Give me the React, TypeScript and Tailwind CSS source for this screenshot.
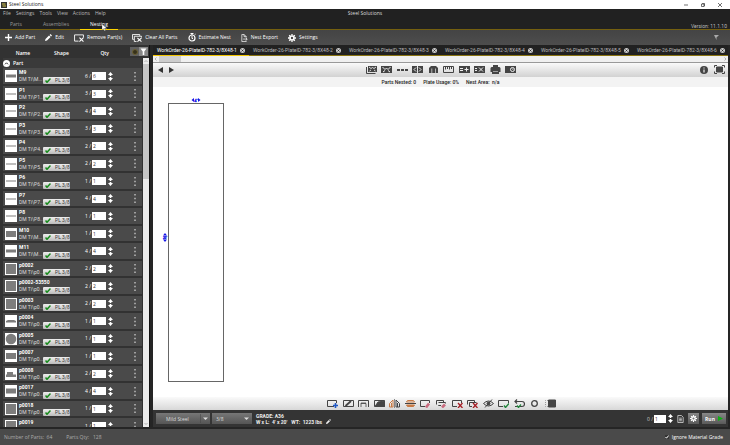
import { useState } from 'react';
import type { ReactNode } from 'react';

interface Part {
  name: string;
  path: string;
  qty: number;
  shape: string;
}

const parts: Part[] = [
  { name: 'M9', path: 'DM Ti\\M...', qty: 6, shape: 'bar' },
  { name: 'P1', path: 'DM Ti\\P1...', qty: 3, shape: 'line' },
  { name: 'P2', path: 'DM Ti\\P2...', qty: 4, shape: 'line' },
  { name: 'P3', path: 'DM Ti\\P3...', qty: 3, shape: 'line' },
  { name: 'P4', path: 'DM Ti\\P4...', qty: 2, shape: 'line' },
  { name: 'P5', path: 'DM Ti\\P5...', qty: 2, shape: 'line' },
  { name: 'P6', path: 'DM Ti\\P6...', qty: 1, shape: 'line' },
  { name: 'P7', path: 'DM Ti\\P7...', qty: 4, shape: 'line' },
  { name: 'P8', path: 'DM Ti\\P8...', qty: 1, shape: 'line' },
  { name: 'M10', path: 'DM Ti\\M...', qty: 1, shape: 'plate' },
  { name: 'M11', path: 'DM Ti\\M...', qty: 4, shape: 'bar' },
  { name: 'p0002', path: 'DM Ti\\p0...', qty: 2, shape: 'square' },
  { name: 'p0002-53550', path: 'DM Ti\\p0...', qty: 2, shape: 'square' },
  { name: 'p0003', path: 'DM Ti\\p0...', qty: 2, shape: 'square' },
  { name: 'p0004', path: 'DM Ti\\p0...', qty: 1, shape: 'cap' },
  { name: 'p0005', path: 'DM Ti\\p0...', qty: 1, shape: 'circle' },
  { name: 'p0007', path: 'DM Ti\\p0...', qty: 1, shape: 'plate' },
  { name: 'p0008', path: 'DM Ti\\p0...', qty: 2, shape: 'step' },
  { name: 'p0017', path: 'DM Ti\\p0...', qty: 4, shape: 'wide' },
  { name: 'p0018', path: 'DM Ti\\p0...', qty: 1, shape: 'square' },
  { name: 'p0019', path: 'DM Ti\\p0...', qty: 1, shape: 'square' },
];

const shapePaths: Record<string, string> = {
  bar: 'M1 4.5h10v3H1z',
  line: 'M1 5.5h10v1H1z',
  plate: 'M1 3h10v6H1z',
  square: 'M1 1h10v10H1z',
  cap: 'M1 7.5V6l2-1h6l2 1v1.5z',
  circle: 'M6 .7a5.3 5.3 0 1 0 0 10.6A5.3 5.3 0 1 0 6 .7z',
  step: 'M1 9V6.5h1V4h6v2.5h3V9z',
  wide: 'M1 3.5h10v5H1z',
};

const workOrders = [1, 2, 3, 4, 5, 6];

function Icon({ children, className = 'h-[9px] w-[11px]', box = '0 0 11 9' }: { children: ReactNode; className?: string; box?: string }) {
  return (
    <svg viewBox={box} className={`shrink-0 ${className}`} fill="none" stroke="currentColor" strokeWidth="1">
      {children}
    </svg>
  );
}

function Gear({ className }: { className: string }) {
  return (
    <Icon box="0 0 10 10" className={className}>
      <circle cx="5" cy="5" r="2.5" strokeWidth="2" />
      <path d="M5 0v2M5 8v2M0 5h2M8 5h2M1.5 1.5l1.3 1.3M7.2 7.2l1.3 1.3M8.5 1.5L7.2 2.8M2.8 7.2L1.5 8.5" strokeWidth="1.6" />
    </Icon>
  );
}

function Pencil({ className }: { className: string }) {
  return (
    <Icon box="0 0 7 7" className={className}>
      <path d="M0 7l.5-2L4 1.4 5.6 3 2 6.5zM4.6.9L5.5 0 7 1.5l-.9.9z" fill="currentColor" stroke="none" />
    </Icon>
  );
}

function Spinner({ label }: { label: string }) {
  return (
    <span className="flex flex-col gap-px">
      <button aria-label={`Increase ${label}`} className="block">
        <Icon box="0 0 5 4" className="block h-1 w-[5px]"><path d="M2.500 0L5 3H3.300v1H1.700V3H0z" fill="currentColor" stroke="none" /></Icon>
      </button>
      <button aria-label={`Decrease ${label}`} className="block">
        <Icon box="0 0 5 4" className="block h-1 w-[5px]"><path d="M2.500 4L5 1H3.300V0H1.700v1H0z" fill="currentColor" stroke="none" /></Icon>
      </button>
    </span>
  );
}

const frame = 'M.5 1.5h10v6H.5z';

const viewTools = [
  { label: 'Nest all', icon: <><path d="M2 1h9v6H2z" fill="currentColor" stroke="none" /><path d="M.5 2v6.500H9.500" /><path d="M3 2l2 1.500L6.500 2.500 8 3.500 10 2M3.500 6l1.500-1M9.500 6L8 5" stroke="#eee" strokeWidth=".9" /></> },
  { label: 'Nest image', icon: <><path d="M0 1h11v7H0z" fill="currentColor" stroke="none" /><path d="M1.500 2l2.500 2.500L5.500 3 7 4.500 9.500 2M2 7l2-1.500M9 7L7 5.500" stroke="#eee" /></> },
  { label: 'Line style', icon: <path d="M0 5h3M4 5h3M8 5h3" strokeWidth="2" /> },
  { label: 'Split', icon: <><path d="M0 1h5v7H0zM6 1h5v7H6z" fill="currentColor" stroke="none" /><path d="M4 2.500L2 4.500l2 2M7 2.500l2 2-2 2" stroke="#eee" /></> },
  { label: 'Stack', icon: <path d="M1 3l2-2h5l2 2v5H8V3.500h-.7V8H4.200V3.500h-.7V8H1z" fill="currentColor" stroke="none" /> },
  { label: 'Measure', icon: <><path d={frame} /><path d="M2.500 2v2.500M4.500 2v2M6.500 2v2.500M8.500 2v2" /></> },
  { label: 'Add sheet', icon: <><path d="M0 1h11v7H0z" fill="currentColor" stroke="none" /><path d="M1 3.500h3M1 5.500h3M7.500 2.500v4M5.500 4.500h4" stroke="#eee" /></> },
  { label: 'Remove sheet', icon: <><path d="M0 1h11v7H0z" fill="currentColor" stroke="none" /><path d="M1 3.500h2M1 5.500h2M5 2.500l4 4M9 2.500l-4 4" stroke="#eee" /></> },
  { label: 'Print', icon: <><path d="M3 0h5v2h1.500l1 1v4H9v2H2V7H.5V3l1-1H3z" fill="currentColor" stroke="none" /><path d="M3 6.500h5" stroke="#ddd" strokeWidth=".6" /></> },
  { label: 'Snapshot', icon: <><path d="M0 1h11v7H0z" fill="currentColor" stroke="none" /><circle cx="7.500" cy="4.500" r="2" stroke="#eee" /><path d="M7.500 3.500v1h1" stroke="#eee" strokeWidth=".6" /></> },
];

const editTools = [
  { label: 'Add plate', icon: <><path d="M7 7.500H.5v-6h9V4" /><path d="M8.500 4v5M6 6.500h5" stroke="#1f57c4" strokeWidth="1.600" /></> },
  { label: 'Edit plate', icon: <><path d={frame} /><path d="M2.500 7L8 2" strokeWidth="1.800" /></> },
  { label: 'Open corner', icon: <><path d="M.5 8V1.500h10V8" /><path d="M3 8V4h5M3 4.500h5V8" strokeWidth=".8" /></> },
  { label: 'Fill corner', icon: <><path d={frame} /><path d="M1 7.500l3-4.500 6.500-1v5.500z" fill="currentColor" /></> },
  { label: 'Mirror', icon: <><path d="M4 1v7H.5V4.500zM2.500 4v4" stroke="#c87a45" /><path d="M5.500 0v9" strokeWidth=".6" /><path d="M7 1v7h3.500V4.500zM8.500 4v4" /></> },
  { label: 'Flip', icon: <><path d="M1.500 3l1-1.500h6l1 1.500z" stroke="#c87a45" /><path d="M0 4.500h11" /><path d="M1.500 6h8l-1 1.500h-6z" fill="#c87a45" stroke="#c87a45" /></> },
  { label: 'Erase', icon: <><path d="M5 7.500H.5v-6h9V4" /><path d="M6 8.500l3-4" stroke="#c96b7e" strokeWidth="2.600" /></> },
  { label: 'Erase all', icon: <><path d="M5 6.500H2.500V7M.5 5.500v-4h7v2M2.500 3.500h7v1" /><path d="M6 8.500l3-3" stroke="#c96b7e" strokeWidth="2.600" /></> },
  { label: 'Delete plate', icon: <><path d="M5 7.500H.5v-6h9V4" /><path d="M6 4l4.500 5M10.500 4L6 9" stroke="#a51f26" strokeWidth="1.300" /></> },
  { label: 'Delete plates', icon: <><path d="M5 7.500H2.500v-4h7M.5 5.500v-4h7v2" /><path d="M6 4l4.500 5M10.500 4L6 9" stroke="#a51f26" strokeWidth="1.300" /></> },
  { label: 'Hide', icon: <><path d="M.5 4.500q5-5 10 0-5 5-10 0z" /><circle cx="5.500" cy="4.500" r="1.500" fill="currentColor" /><path d="M2 8.500L9 .5" /></> },
  { label: 'Accept', icon: <><path d="M5 7.500H.5v-6h10V4" /><path d="M6 6.500l1.500 2L11 4.500" stroke="#21843b" strokeWidth="1.400" /></> },
  { label: 'Undo', icon: <><path d="M3 .5l-2 2 2 2M1 2.500h7q2.500 0 2.500 2.500T8 7.500H1" strokeWidth="1.200" /><path d="M3 6.500l1.500 2L7 5.500" stroke="#21843b" strokeWidth="1.300" /></> },
  { label: 'Circle', icon: <circle cx="5.500" cy="4.500" r="2.800" strokeWidth="1.300" /> },
  { label: 'Contrast', icon: <><path d="M3.500 1h7v7h-7z" fill="currentColor" /><path d="M3 1.500H.5v6H3" stroke="#999" strokeDasharray="1 1" /></> },
];

const actions = [
  { label: 'Add Part', icon: <Icon box="0 0 7 7" className="size-[7px]"><path d="M3.500 0v7M0 3.500h7" strokeWidth="1.400" /></Icon> },
  { label: 'Edit', icon: <Pencil className="size-[7px]" /> },
  { label: 'Remove Part(s)', icon: <Icon className="h-2 w-[10px]"><path d="M5 8H.5V1h10v3" /><path d="M6 4l4.500 4.500M10.500 4L6 8.500" strokeWidth="1.200" /></Icon> },
  { label: 'Clear All Parts', icon: <Icon className="h-2 w-[10px]"><path d="M2 6H.5V.5h8V2M5 8.500H2.500v-6h8V4" /><path d="M6 4.500l4.500 4M10.500 4.500L6 8.500" strokeWidth="1.200" /></Icon> },
  { label: 'Estimate Nest', icon: <Icon box="0 0 8 9" className="h-[9px] w-2"><circle cx="4" cy="5" r="3" strokeWidth="1.200" /><path d="M2.500.5h3M4 1v1M4 3v2.500h1M6.500 2l1-.8" /></Icon> },
  { label: 'Nest Export', icon: <Icon box="0 0 7 9" className="h-2 w-[7px]"><path d="M5.500 4V3L3 .5H.5v8h5V7.500M3 .5V3h2.500M2 5.700h4.500M5 4.300l1.500 1.400L5 7.200" strokeWidth=".8" /></Icon> },
  { label: 'Settings', icon: <Gear className="size-2" /> },
];

function PartRow({ part }: { part: Part }) {
  return (
    <tr className="odd:h-[18px] even:h-[17px]">
      <td className="border-b-2 border-[#323232] bg-[#4a4a4a] p-0 pl-0.5">
        <div className="flex h-[14px] items-center gap-0.5">
          <svg viewBox="0 0 12 12" className="size-3 shrink-0 bg-white">
            <path d={shapePaths[part.shape]} fill="#7d7d7d" />
          </svg>
          <div className="w-6 font-[Roboto,sans-serif] text-[5px] leading-[7px] whitespace-nowrap">
            <div className="font-bold text-white">{part.name}</div>
            <div className="text-[#ddd]">{part.path}</div>
          </div>
        </div>
      </td>
      <td className="border-b-2 border-[#323232] bg-[#4a4a4a] p-0 align-bottom">
        <button className="flex h-[7px] w-[27px] items-center gap-1 rounded-[1px] bg-linear-to-b from-[#eee] to-[#bbb] pl-0.5 font-[Roboto,sans-serif] text-[5px] leading-[7px] text-[#333]">
          <Icon box="0 0 6 5" className="h-[5px] w-1.5 text-[#178a1c]"><path d="M.5 2.500L2 4.300 5.500.5" strokeWidth="1.500" /></Icon>
          PL 3/8
        </button>
      </td>
      <td className="border-b-2 border-[#323232] bg-[#4a4a4a] p-0">
        <div className="flex items-center justify-end gap-0.5 text-[5px] leading-[7px]">
          <label className="flex items-center gap-px">
            {part.qty} /
            <input aria-label={`${part.name} quantity`} defaultValue={part.qty} className="h-2 w-[14px] bg-white pl-px text-[#333] outline-none" />
          </label>
          <Spinner label={part.name} />
        </div>
      </td>
      <td className="border-b-2 border-[#323232] bg-[#4a4a4a] p-0 pr-1.5">
        <button aria-label={`${part.name} menu`} className="ml-auto block">
          <Icon box="0 0 2 9" className="block h-[9px] w-0.5 text-[#ccc]"><path d="M1 0v1.500M1 3.700v1.500M1 7.500V9" strokeWidth="1.300" /></Icon>
        </button>
      </td>
    </tr>
  );
}

function PartsPanel() {
  return (
    <aside className="relative flex w-[150px] shrink-0 overflow-hidden border-r border-[#111] bg-[#323232] pl-[3px]">
      <div className="min-w-0 flex-1">
        <table className="w-full table-fixed border-separate border-spacing-0">
          <colgroup>
            <col className="w-10" />
            <col className="w-[37px]" />
            <col className="w-[33px]" />
            <col />
          </colgroup>
          <thead>
            <tr className="h-[13px] text-[5px] leading-[7px]">
              <th className="p-0 pt-[3px] font-semibold">Name</th>
              <th className="p-0 pt-[3px] font-semibold">Shape</th>
              <th className="p-0 pt-[3px] pr-1 text-right font-semibold">Qty</th>
              <th className="p-0" aria-label="Menu" />
            </tr>
            <tr className="h-[10px]">
              <th colSpan={4} className="bg-[#3a3a3a] p-0 text-left text-[5px] leading-[7px] font-semibold">
                <button className="flex items-center gap-[3px]">
                  <Icon box="0 0 7 7" className="size-[7px]"><circle cx="3.500" cy="3.500" r="3.500" fill="white" stroke="none" /><path d="M2 4.300l1.500-1.500L5 4.300" stroke="#333" /></Icon>
                  Part
                </button>
              </th>
            </tr>
          </thead>
          <tbody>
            {parts.map((part) => (
              <PartRow key={part.name} part={part} />
            ))}
          </tbody>
        </table>
      </div>
      <div className="mt-[13px] ml-px flex w-1.5 flex-col bg-[#ececec] text-[#999]">
        <Icon box="0 0 6 6" className="size-1.5"><path d="M1.500 4L3 2.500 4.500 4" strokeWidth=".7" /></Icon>
        <div className="h-[115px] bg-[#c6c6c6]" />
        <Icon box="0 0 6 6" className="mt-auto size-1.5"><path d="M1.500 2L3 3.500 4.500 2" strokeWidth=".7" /></Icon>
      </div>
      <div className="absolute top-0.5 right-px flex h-[9px] w-[18px] bg-[#888]">
        <button aria-label="Group" className="flex flex-1 items-center justify-center bg-[#606060]">
          <span className="size-1.5 rounded-full border border-[#6b6030] bg-[#36311b]" />
        </button>
        <button aria-label="Filter" className="flex flex-1 items-center justify-center">
          <Icon box="0 0 7 7" className="size-[7px]"><path d="M.5.500h6L4.300 3.500V7H2.700V3.500z" fill="white" stroke="none" /></Icon>
        </button>
      </div>
    </aside>
  );
}

function Workspace() {
  return (
    <main className="flex min-w-0 flex-1 flex-col border-x-[3px] border-r-2 border-[#252525] bg-white">
      <div className="flex h-[11px] shrink-0 overflow-hidden bg-[#212121]">
        {workOrders.map((n) => (
          <div
            key={n}
            className={`flex w-24 shrink-0 items-center justify-between border-b pt-px pr-1 pl-1 font-[Roboto,sans-serif] text-[5px] leading-[7px] whitespace-nowrap ${n === 1 ? 'border-[#f2c500] text-white' : 'border-[#8a7410] text-[#bbb]'}`}
          >
            <button>WorkOrder-26-PlateID-782-3/8X48-{n}</button>
            <button aria-label={`Close work order ${n}`}>
              <Icon box="0 0 5 5" className="size-[5px]"><circle cx="2.500" cy="2.500" r="2.500" fill="#ccc" stroke="none" /><path d="M1.500 1.500l2 2M3.500 1.500l-2 2" stroke="#222" strokeWidth=".8" /></Icon>
            </button>
          </div>
        ))}
      </div>
      <div className="flex h-[7px] shrink-0 items-center border-b border-[#999] bg-[#f0f0f0] text-[#888]">
        <Icon box="0 0 6 6" className="size-1.5"><path d="M3.500 1.500L2 3l1.500 1.500" strokeWidth=".6" /></Icon>
        <div className="h-full w-[22px] bg-[#cdcdcd]" />
        <Icon box="0 0 6 6" className="ml-auto size-1.5"><path d="M2.500 1.500L4 3 2.500 4.500" strokeWidth=".6" /></Icon>
      </div>
      <div className="grid h-[14px] shrink-0 grid-cols-[1fr_151px_1fr] items-center bg-linear-to-b from-[#fafafa] to-[#d2d2d2] pb-px pl-px text-[#444]">
        <div className="flex gap-1.5 pl-1">
          <button aria-label="Previous"><Icon box="0 0 5 6" className="block h-1.5 w-[5px] text-[#333]"><path d="M5 0v6L0 3z" fill="currentColor" stroke="none" /></Icon></button>
          <button aria-label="Next"><Icon box="0 0 5 6" className="block h-1.5 w-[5px] text-[#333]"><path d="M0 0v6l5-3z" fill="currentColor" stroke="none" /></Icon></button>
        </div>
        <div className="flex justify-between">
          {viewTools.map((tool) => (
            <button key={tool.label} aria-label={tool.label}><Icon className="block h-[9px] w-[11px]">{tool.icon}</Icon></button>
          ))}
        </div>
        <div className="flex items-center justify-end gap-1.5 pr-[3px]">
          <button aria-label="Info">
            <Icon box="0 0 8 8" className="block size-2"><circle cx="4" cy="4" r="4" fill="currentColor" stroke="none" /><path d="M4 1.500v1M4 3.500v3" stroke="#eee" strokeWidth="1.200" /></Icon>
          </button>
          <button aria-label="Fit to window">
            <Icon className="block h-[9px] w-[11px]"><path d="M2.500 2h6v5h-6z" fill="currentColor" /><path d="M.5 2.500V.5H3M8 .5h2.500v2M10.500 6.500v2H8M3 8.500H.5v-2" /></Icon>
          </button>
        </div>
      </div>
      <div className="flex h-[10px] shrink-0 items-center justify-center gap-[7px] bg-[#f3f3f3] font-[Roboto,sans-serif] text-[5px] leading-[7px] font-medium text-[#222]">
        <span>Parts Nested: 0</span>
        <span>Plate Usage: 0%</span>
        <span>Nest Area:&nbsp; n/a</span>
      </div>
      <div className="min-h-0 flex-1 pt-2 pl-2">
        <svg viewBox="0 0 64 288" className="h-[288px] w-16">
          <rect x="7.500" y="8.500" width="55" height="278" fill="white" stroke="#666" />
          <g fill="#1414e6" stroke="#1414e6" fontFamily="'Open Sans', sans-serif" fontSize="4" fontWeight="700">
            <path d="M30.500 5l2.500-2v4zM39.500 5L37 3v4z" stroke="none" />
            <text x="35" y="6.500" textAnchor="middle" strokeWidth=".3">4&apos;</text>
            <path d="M4 138l-2 2.500h4zM4 147l-2-2.500h4z" stroke="none" />
            <text x="4" y="144" textAnchor="middle" fontSize="3" strokeWidth=".3">20&apos;</text>
          </g>
        </svg>
      </div>
      <div className="flex h-[13px] shrink-0 items-center justify-center bg-linear-to-b from-[#fafafa] to-[#d8d8d8] pl-0.5 text-[#444]">
        <div className="flex w-[229px] justify-between">
          {editTools.map((tool) => (
            <button key={tool.label} aria-label={tool.label}><Icon className="block h-[9px] w-[11px]">{tool.icon}</Icon></button>
          ))}
        </div>
      </div>
      <MaterialBar />
    </main>
  );
}

function MaterialBar() {
  return (
    <div className="flex h-[17px] shrink-0 items-center bg-[#343434] pr-0.5 pl-[3px] text-[5px] leading-[6px]">
      <div className="relative mr-0.5 w-[54px]">
        <select aria-label="Material" className="block h-[11px] w-full appearance-none bg-linear-to-b from-[#777] to-[#555] pl-[10px] text-[#ddd]">
          <option>Mild Steel</option>
        </select>
        <svg viewBox="0 0 10 11" className="pointer-events-none absolute top-0 right-0 h-[11px] w-[10px]"><path d="M0 1v9" stroke="#444" /><path d="M3 4.500h5L5.500 7z" fill="#ddd" /></svg>
      </div>
      <div className="relative mr-1 w-10">
        <select aria-label="Thickness" className="block h-[11px] w-full appearance-none bg-linear-to-b from-[#777] to-[#555] pl-1 text-[#ddd]">
          <option>3/8</option>
        </select>
        <svg viewBox="0 0 10 11" className="pointer-events-none absolute top-0 right-0 h-[11px] w-[10px]"><path d="M2 4.500h5L4.500 7z" fill="#ddd" /></svg>
      </div>
      <div className="font-[Roboto,sans-serif] font-bold whitespace-nowrap text-[#eee]">
        <div>GRADE: A36</div>
        <div className="flex items-center gap-1">
          <span>W x L:&nbsp; 4&apos; x 20&apos;</span>
          <span>WT:&nbsp; 1223 lbs</span>
          <button aria-label="Edit plate size"><Pencil className="block size-[5px]" /></button>
        </div>
      </div>
      <div className="ml-auto flex items-center gap-0.5">
        <label className="flex items-center gap-px text-[#ccc]">
          0 /
          <input aria-label="Plate quantity" defaultValue="1" className="h-2 w-3 bg-white pl-px text-[#333] outline-none" />
        </label>
        <Spinner label="plate quantity" />
        <button aria-label="Report" className="mx-0.5">
          <Icon box="0 0 7 9" className="block h-2 w-[7px] text-[#ddd]"><path d="M.5.500h4l2 2v6h-6zM2 3.500h3M2 5h3M2 6.500h3" strokeWidth=".9" /></Icon>
        </button>
        <button aria-label="Run settings" className="mr-px flex size-[11px] items-center justify-center bg-linear-to-b from-[#888] to-[#5a5a5a]">
          <Gear className="size-[7px]" />
        </button>
        <button className="flex h-[11px] w-6 items-center justify-center gap-[3px] bg-linear-to-b from-[#888] to-[#5a5a5a] font-bold">
          Run
          <Icon box="0 0 5 5" className="size-[5px]"><path d="M0 0l5 2.500L0 5z" fill="#0fae14" stroke="none" /></Icon>
        </button>
      </div>
    </div>
  );
}

export default function App() {
  const [ignoreGrade, setIgnoreGrade] = useState(true);

  return (
    <div className="flex h-screen w-full flex-col overflow-hidden bg-[#4a4a4a] font-['Open_Sans',sans-serif] text-[5px] leading-[7px] text-white">
      <div className="flex h-[9px] shrink-0 items-center gap-0.5 bg-white px-px text-[#222]">
        <Icon box="0 0 6 6" className="size-1.5"><path d="M0 0h6v6H0z" fill="#333" stroke="none" /><path d="M1 2h3.500M1.500 4H5" stroke="#d8c84a" /></Icon>
        <span>Steel Solutions</span>
        <div className="ml-auto flex gap-[13px] pr-[7px] text-[#333]">
          <button aria-label="Minimize"><Icon box="0 0 4 4" className="block size-1"><path d="M0 2h4" strokeWidth=".7" /></Icon></button>
          <button aria-label="Restore"><Icon box="0 0 4 4" className="block size-1"><path d="M.5 1h2.500v2.500H.5zM1.500 1V.4h2V3H3" strokeWidth=".7" /></Icon></button>
          <button aria-label="Close"><Icon box="0 0 4 4" className="block size-1"><path d="M0 0l4 4M4 0L0 4" strokeWidth=".7" /></Icon></button>
        </div>
      </div>

      <header className="relative flex h-[21px] shrink-0 flex-col justify-between border-b border-[#75600f] bg-[#212121]">
        <div className="grid grid-cols-3">
          <nav className="flex gap-[5px] pl-[3px] text-[#bbb]">
            {['File', 'Settings', 'Tools', 'View', 'Actions', 'Help'].map((item) => (
              <button key={item}>{item}</button>
            ))}
          </nav>
          <h1 className="pt-px text-center text-[#ddd]">Steel Solutions</h1>
        </div>
        <div className="flex items-end justify-between">
          <nav className="-mb-px flex text-[#999]">
            <button className="h-[11px] w-8">Parts</button>
            <button className="h-[11px] w-12">Assemblies</button>
            <button className="h-[11px] w-[38px] border-b border-[#ffd500] text-white">Nesting</button>
          </nav>
          <span className="pr-[3px] font-[Roboto,sans-serif] leading-[6px] text-[#bbb]">Version: 11.1.10</span>
        </div>
        <svg viewBox="0 0 5 7" className="pointer-events-none absolute top-[15px] left-[102px] z-10 h-[7px] w-[5px]">
          <path d="M0 0v6l1.500-1.300L2.500 7l1-.5-1-2H5z" fill="white" stroke="#333" strokeWidth=".3" />
        </svg>
      </header>

      <div className="flex h-[15px] shrink-0 items-center gap-[10px] bg-linear-to-b from-[#444] to-[#4d4d4d] pl-[5px]">
        {actions.map((action) => (
          <button key={action.label} className="flex items-center gap-[3px] whitespace-nowrap">
            {action.icon}
            {action.label}
          </button>
        ))}
        <button aria-label="Flag" className="mr-[11px] ml-auto">
          <Icon box="0 0 5 5" className="block size-[5px]"><path d="M0 0h5L2.500 2.500V5z" fill="#aaa" stroke="none" /></Icon>
        </button>
      </div>

      <div className="flex min-h-0 flex-1 border-b-2 border-[#252525]">
        <PartsPanel />
        <Workspace />
      </div>

      <footer className="flex h-4 shrink-0 items-center gap-[14px] bg-[#4a4a4a] px-1 text-[#aaa]">
        <span>Number of Parts:&nbsp; 64</span>
        <span>Parts Qty:&nbsp;&nbsp; 128</span>
        <label className="ml-auto flex items-center gap-[3px] pr-[3px] text-white">
          <span className="relative flex size-1">
            <input
              type="checkbox"
              checked={ignoreGrade}
              onChange={(e) => setIgnoreGrade(e.target.checked)}
              className="size-1 appearance-none bg-[#333]"
            />
            {ignoreGrade && (
              <svg viewBox="0 0 4 4" className="pointer-events-none absolute inset-0 size-1"><path d="M.5 2l1 1.200L3.700.5" fill="none" stroke="white" /></svg>
            )}
          </span>
          Ignore Material Grade
        </label>
      </footer>
    </div>
  );
}
